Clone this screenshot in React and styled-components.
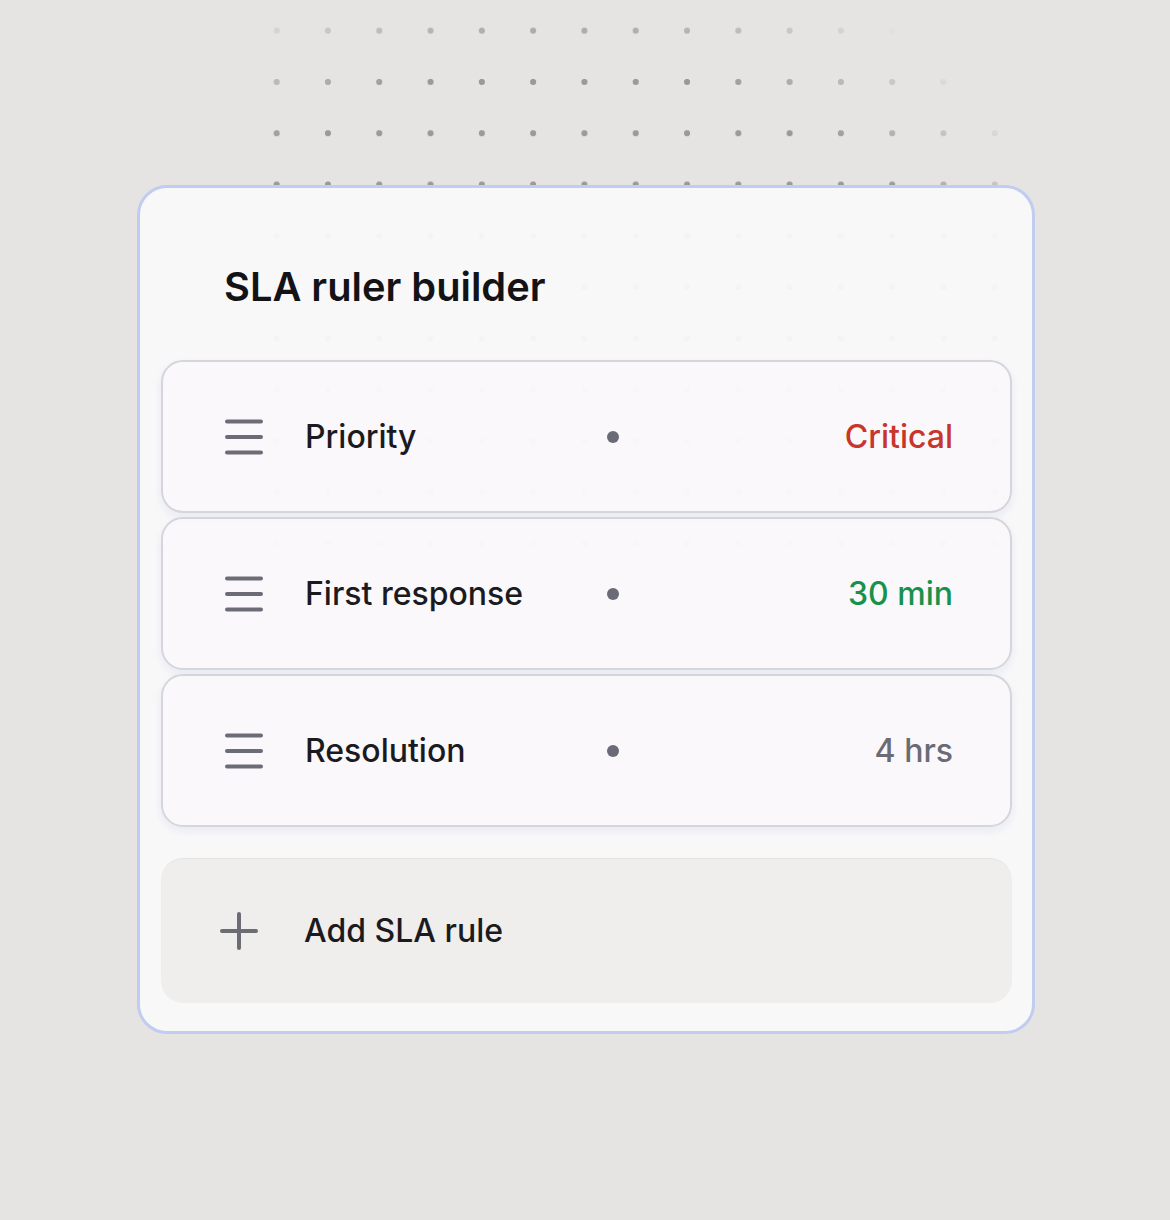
import React from "react";
import styled, { createGlobalStyle } from "styled-components";

const Global = createGlobalStyle`
  html, body { margin: 0; padding: 0; background: #e5e4e2; }
  body { font-family: Inter, "Noto Sans", "Liberation Sans", sans-serif; -webkit-font-smoothing: antialiased; }
`;

const Page = styled.div`
  position: relative;
  width: 1170px;
  height: 1220px;
  box-sizing: border-box;
  padding: 185px 0 0 137px;
  background: #e5e4e2;
  overflow: hidden;
`;

const DotGrid = styled.div`
  position: absolute;
  left: 251px;
  top: 5px;
  width: 770px;
  height: 560px;
  background-image: radial-gradient(circle, #9a9a9c 0 2.8px, transparent 3.4px);
  background-size: 51.3px 51.3px;
  -webkit-mask-image: radial-gradient(ellipse 85% 100% at 40% 78%, #000 68%, transparent 90%);
  mask-image: radial-gradient(ellipse 85% 100% at 40% 78%, #000 68%, transparent 90%);
  pointer-events: none;
`;

const Card = styled.section`
  position: relative;
  width: 898px;
  height: 849px;
  box-sizing: border-box;
  border: 3px solid #c0ccf0;
  border-radius: 30px;
  background: rgba(250, 249, 250, 0.95);
  padding: 0 20px 28px 21px;
  display: flex;
  flex-direction: column;
`;

const Title = styled.h1`
  margin: 76px 0 50px 63px;
  font-size: 39.8px;
  line-height: 46px;
  font-weight: 600;
  color: #131316;
`;

const List = styled.div`
  display: flex;
  flex-direction: column;
  gap: 4px;
`;

const Row = styled.div`
  height: 153px;
  box-sizing: border-box;
  border: 2px solid #d6d5da;
  border-radius: 22px;
  background: rgba(250, 249, 250, 0.6);
  box-shadow: 0 4px 10px rgba(170, 188, 230, 0.22);
  display: flex;
  align-items: center;
  padding: 0 57px 0 62px;
`;

const IconBox = styled.span`
  width: 38px;
  height: 38px;
  display: flex;
  align-items: center;
  justify-content: center;
  flex: none;
  color: #6c6c76;
`;

const Label = styled.span`
  margin-left: 42px;
  width: 302px;
  flex: none;
  font-size: 32px;
  font-weight: 500;
  color: #1b1b1f;
`;

const Bullet = styled.span`
  width: 12px;
  height: 12px;
  border-radius: 50%;
  background: #6b6b77;
  flex: none;
`;

const toneColor = { red: "#c8352b", green: "#17924c", gray: "#6b6b76" };

const Value = styled.span`
  flex: 1;
  text-align: right;
  font-size: 32px;
  font-weight: 500;
  color: ${(p) => toneColor[p.$tone]};
`;

const AddButton = styled.button`
  margin-top: 31px;
  height: 145px;
  border: none;
  border-radius: 22px;
  background: #efeeec;
  box-shadow: inset 0 2px 1px -1px rgba(0, 0, 0, 0.05);
  display: flex;
  align-items: center;
  padding: 0 0 0 59px;
  font-family: inherit;
  cursor: pointer;
`;

const AddLabel = styled.span`
  margin-left: 46px;
  font-size: 32px;
  font-weight: 500;
  color: #1b1b1f;
`;

const Handle = () => (
  <svg width="38" height="36" viewBox="0 0 38 36" fill="none">
    <g stroke="currentColor" strokeWidth="4" strokeLinecap="round">
      <line x1="2" y1="2.5" x2="36" y2="2.5" />
      <line x1="2" y1="18" x2="36" y2="18" />
      <line x1="2" y1="33.5" x2="36" y2="33.5" />
    </g>
  </svg>
);

const Plus = () => (
  <svg width="38" height="38" viewBox="0 0 38 38" fill="none">
    <g stroke="currentColor" strokeWidth="4" strokeLinecap="round">
      <line x1="19" y1="2" x2="19" y2="36" />
      <line x1="2" y1="19" x2="36" y2="19" />
    </g>
  </svg>
);

const rules = [
  { label: "Priority", value: "Critical", tone: "red" },
  { label: "First response", value: "30 min", tone: "green" },
  { label: "Resolution", value: "4 hrs", tone: "gray" },
];

export default function App() {
  return (
    <Page>
      <Global />
      <DotGrid />
      <Card>
        <Title>SLA ruler builder</Title>
        <List>
          {rules.map((r) => (
            <Row key={r.label}>
              <IconBox>
                <Handle />
              </IconBox>
              <Label>{r.label}</Label>
              <Bullet />
              <Value $tone={r.tone}>{r.value}</Value>
            </Row>
          ))}
        </List>
        <AddButton>
          <IconBox>
            <Plus />
          </IconBox>
          <AddLabel>Add SLA rule</AddLabel>
        </AddButton>
      </Card>
    </Page>
  );
}
